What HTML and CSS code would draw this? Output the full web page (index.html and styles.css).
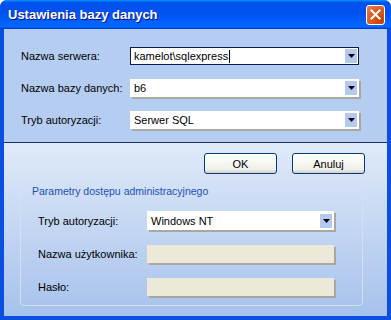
FILE: index.html
```html
<!DOCTYPE html>
<html lang="pl">
<head>
    <meta charset="UTF-8">
    <title>Ustawienia bazy danych</title>
    <link rel="stylesheet" href="styles.css">
</head>
<body>
    <div class="window">
        <div class="titlebar">
            <span class="title">Ustawienia bazy danych</span>
            <span class="close">
                <svg width="11" height="11" viewBox="0 0 11 11"><path d="M1.5 1.5 L9.5 9.5 M9.5 1.5 L1.5 9.5" stroke="#fff" stroke-width="2" stroke-linecap="square"/></svg>
            </span>
        </div>

        <div class="client">
            <div class="top-panel">
                <label>Nazwa serwera:</label>
                <div class="combo focused">
                    <span class="value">kamelot\sqlexpress</span><span class="caret"></span>
                    <span class="drop"><svg width="7" height="4" viewBox="0 0 7 4"><path d="M0 0 H7 L3.5 4 Z" fill="#000"/></svg></span>
                </div>

                <label>Nazwa bazy danych:</label>
                <div class="combo">
                    <span class="value">b6</span>
                    <span class="drop"><svg width="7" height="4" viewBox="0 0 7 4"><path d="M0 0 H7 L3.5 4 Z" fill="#000"/></svg></span>
                </div>

                <label>Tryb autoryzacji:</label>
                <div class="combo">
                    <span class="value">Serwer SQL</span>
                    <span class="drop"><svg width="7" height="4" viewBox="0 0 7 4"><path d="M0 0 H7 L3.5 4 Z" fill="#000"/></svg></span>
                </div>
            </div>

            <div class="bottom-panel">
                <div class="buttons">
                    <button>OK</button>
                    <button>Anuluj</button>
                </div>

                <fieldset class="group">
                    <legend>Parametry dostępu administracyjnego</legend>
                    <div class="group-grid">
                        <label>Tryb autoryzacji:</label>
                        <div class="combo">
                            <span class="value">Windows NT</span>
                            <span class="drop"><svg width="7" height="4" viewBox="0 0 7 4"><path d="M0 0 H7 L3.5 4 Z" fill="#000"/></svg></span>
                        </div>

                        <label>Nazwa użytkownika:</label>
                        <div class="textbox disabled"></div>

                        <label>Hasło:</label>
                        <div class="textbox disabled"></div>
                    </div>
                </fieldset>
            </div>
        </div>
    </div>
</body>
</html>
```

FILE: styles.css
```css
body {
    margin: 0;
    background: #ffffff;
    font-family: "Liberation Sans", Arial, sans-serif;
    font-size: 11px;
    color: #000;
}

.window {
    width: 391px;
    height: 320px;
    display: flex;
    flex-direction: column;
    background: #0a4fdf;
    border-radius: 7px 7px 0 0;
    overflow: hidden;
}

.titlebar {
    height: 29px;
    flex: none;
    display: flex;
    align-items: center;
    justify-content: space-between;
    padding: 0 6px 0 8px;
    background: linear-gradient(180deg, #0997ff, #0053ee 8%, #0050ee 40%, #0066ff 88%, #0066ff 93%, #005bff 95%, #003dd7 96%, #003dd7);
}

.title {
    color: #fff;
    font-weight: bold;
    font-size: 13px;
    text-shadow: 1px 1px #0f1089;
}

.close {
    width: 19px;
    height: 20px;
    box-sizing: border-box;
    border: 1px solid #fff;
    border-radius: 3px;
    display: flex;
    align-items: center;
    justify-content: center;
    background: radial-gradient(circle at 85% 85%, #c84300 0%, #dc5a22 55%, #e8845c 100%);
}

.client {
    flex: 1;
    margin: 0 4px 4px;
    display: flex;
    flex-direction: column;
}

.top-panel {
    height: 114px;
    box-sizing: border-box;
    padding: 18px 0 0 17px;
    background: #b5cdf0;
    border-bottom: 1px solid #1b2f6c;
    display: grid;
    grid-template-columns: 109px 229px;
    grid-auto-rows: 18px;
    row-gap: 14px;
    align-items: center;
    align-content: start;
}

.combo {
    height: 18px;
    box-sizing: border-box;
    display: flex;
    align-items: center;
    background: #fff;
    box-shadow: 2px 2px 0 #a8a89e;
}

.combo.focused {
    border: 1px solid #0c1c52;
    box-shadow: none;
}

.value {
    padding-left: 4px;
    white-space: nowrap;
}

.focused .value {
    padding-left: 3px;
}

.caret {
    width: 1px;
    height: 13px;
    background: #000;
    margin-left: 1px;
}

.drop {
    margin-left: auto;
    margin-right: 2px;
    width: 12px;
    height: 14px;
    background: #b4c9ef;
    display: flex;
    align-items: center;
    justify-content: center;
}

.focused .drop {
    margin-right: 1px;
}

.bottom-panel {
    flex: 1;
    padding: 10px 22px 0 16px;
    background: linear-gradient(180deg, #e0eaf9, #a6c2ec);
}

.buttons {
    display: flex;
    justify-content: flex-end;
    gap: 15px;
}

button {
    width: 73px;
    height: 21px;
    font-family: "Liberation Sans", Arial, sans-serif;
    font-size: 11px;
    color: #000;
    border: 1px solid #003c74;
    border-radius: 3px;
    background: linear-gradient(180deg, #ffffff, #f0f0ea 80%, #d6d0c5);
    padding: 0;
}

.group {
    width: 343px;
    box-sizing: border-box;
    margin: 11px 0 0;
    padding: 0 0 9px 17px;
    border: 1px solid #d4e0f2;
    border-radius: 4px;
}

.group legend {
    color: #1d4fb0;
    font-size: 10.5px;
    margin-left: -8px;
    padding: 0 2px;
}

.group-grid {
    padding-top: 14px;
    display: grid;
    grid-template-columns: 109px 187px;
    grid-template-rows: 19px 18px 18px;
    row-gap: 15px;
    align-items: center;
}

.group-grid .combo {
    height: 19px;
}

.textbox {
    height: 18px;
    background: #fff;
    box-shadow: 2px 2px 0 #a8a89e;
}

.textbox.disabled {
    background: #ece9d8;
}
```
